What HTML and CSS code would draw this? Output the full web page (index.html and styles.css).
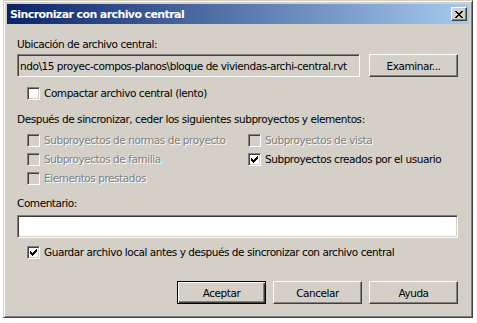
FILE: index.html
```html
<!DOCTYPE html>
<html lang="es">
<head>
<meta charset="utf-8">
<title>Sincronizar con archivo central</title>
<link rel="stylesheet" href="styles.css">
</head>
<body>
<div class="window">
  <div class="titlebar">
    <span class="title">Sincronizar con archivo central</span>
    <span class="close" aria-label="Cerrar">
      <svg width="8" height="7" viewBox="0 0 8 7" shape-rendering="crispEdges">
        <path d="M0 0h2v1H0zM6 0h2v1H6zM1 1h2v1H1zM5 1h2v1H5zM2 2h4v1H2zM3 3h2v1H3zM2 4h4v1H2zM1 5h2v1H1zM5 5h2v1H5zM0 6h2v1H0zM6 6h2v1H6z" fill="#000"/>
      </svg>
    </span>
  </div>
  <div class="content">
    <div class="label">Ubicación de archivo central:</div>
    <div class="path-row">
      <div class="field field-path">ndo\15 proyec-compos-planos\bloque de viviendas-archi-central.rvt</div>
      <div class="btn">Examinar...</div>
    </div>
    <div class="check row-compact"><span class="box"></span><span class="txt">Compactar archivo central (lento)</span></div>
    <div class="label lbl-after">Después de sincronizar, ceder los siguientes subproyectos y elementos:</div>
    <div class="grid">
      <div class="check disabled"><span class="box"></span><span class="txt">Subproyectos de normas de proyecto</span></div>
      <div class="check disabled"><span class="box"></span><span class="txt">Subproyectos de vista</span></div>
      <div class="check disabled"><span class="box"></span><span class="txt">Subproyectos de familia</span></div>
      <div class="check"><span class="box"><svg class="tick" width="7" height="7" viewBox="0 0 7 7" shape-rendering="crispEdges"><path d="M0 2h1v3H0zM1 3h1v3H1zM2 4h1v3H2zM3 3h1v3H3zM4 2h1v3H4zM5 1h1v3H5zM6 0h1v3H6z" fill="#000"/></svg></span><span class="txt">Subproyectos creados por el usuario</span></div>
      <div class="check disabled"><span class="box"></span><span class="txt">Elementos prestados</span></div>
    </div>
    <div class="label lbl-comment">Comentario:</div>
    <div class="field field-comment"></div>
    <div class="check row-save"><span class="box"><svg class="tick" width="7" height="7" viewBox="0 0 7 7" shape-rendering="crispEdges"><path d="M0 2h1v3H0zM1 3h1v3H1zM2 4h1v3H2zM3 3h1v3H3zM4 2h1v3H4zM5 1h1v3H5zM6 0h1v3H6z" fill="#000"/></svg></span><span class="txt">Guardar archivo local antes y después de sincronizar con archivo central</span></div>
    <div class="buttons">
      <div class="btn default">Aceptar</div>
      <div class="btn">Cancelar</div>
      <div class="btn">Ayuda</div>
    </div>
  </div>
</div>
</body>
</html>
```

FILE: styles.css
```css
html, body {
  margin: 0;
  background: #ffffff;
}
body {
  font-family: "DejaVu Sans", "Liberation Sans", sans-serif;
  font-size: 10.5px;
  letter-spacing: -0.45px;
  color: #000;
}
.window {
  margin-left: 3px;
  width: 470px;
  height: 318px;
  box-sizing: border-box;
  background: #d4d0c8;
  border: 1px solid;
  border-color: #d4d0c8 #404040 #404040 #d4d0c8;
  box-shadow: inset 1px 1px #fff, inset -1px -1px #808080;
  padding: 3px;
  display: flex;
  flex-direction: column;
}
.titlebar {
  height: 20px;
  flex: none;
  background: linear-gradient(to right, #0a246a, #a6caf0);
  display: flex;
  align-items: center;
  justify-content: space-between;
  padding: 0 2px 0 3px;
}
.title {
  color: #fff;
  font-size: 11px;
  font-weight: bold;
  letter-spacing: -0.6px;
  line-height: 13px;
}
.close {
  width: 16px;
  height: 14px;
  box-sizing: border-box;
  background: #d4d0c8;
  border: 1px solid;
  border-color: #fff #404040 #404040 #fff;
  box-shadow: inset -1px -1px #808080, inset 1px 1px #d4d0c8;
  display: flex;
  align-items: center;
  justify-content: center;
}
.close svg { display: block; }
.content {
  padding: 14px 11px 0 10px;
  display: flex;
  flex-direction: column;
}
.label {
  line-height: 13px;
  height: 13px;
  white-space: nowrap;
}
.path-row {
  display: flex;
  gap: 9px;
  margin-top: 3px;
}
.field {
  box-sizing: border-box;
  height: 23px;
  border: 1px solid;
  border-color: #808080 #fff #fff #808080;
  box-shadow: inset 1px 1px #404040, inset -1px -1px #d4d0c8;
}
.field-path {
  width: 343px;
  background: #d4d0c8;
  padding: 0 2px;
  display: flex;
  align-items: center;
  white-space: nowrap;
  overflow: hidden;
}
.field-comment {
  background: #fff;
  margin-top: 5px;
}
.btn {
  box-sizing: border-box;
  width: 89px;
  height: 23px;
  flex: none;
  display: flex;
  align-items: center;
  justify-content: center;
  border: 1px solid;
  border-color: #fff #404040 #404040 #fff;
  box-shadow: inset -1px -1px #808080, inset 1px 1px #d4d0c8;
}
.btn.default {
  border-color: #000;
  box-shadow: inset 1px 1px #fff, inset -1px -1px #404040, inset -2px -2px #808080;
}
.check {
  display: flex;
  align-items: center;
  height: 13px;
  line-height: 13px;
  padding-left: 10px;
  white-space: nowrap;
}
.box {
  flex: none;
  width: 13px;
  height: 13px;
  box-sizing: border-box;
  margin-right: 4px;
  background: #fff;
  border: 1px solid;
  border-color: #808080 #fff #fff #808080;
  box-shadow: inset 1px 1px #404040, inset -1px -1px #d4d0c8;
  position: relative;
}
.tick {
  position: absolute;
  left: 2px;
  top: 2px;
  display: block;
}
.check.disabled .box {
  background: #d4d0c8;
}
.check.disabled .txt {
  color: #808080;
  text-shadow: 1px 1px 0 #fff;
}
.row-compact { margin-top: 10px; }
.lbl-after { margin-top: 13px; }
.grid {
  display: grid;
  grid-template-columns: 221px 1fr;
  row-gap: 6px;
  margin-top: 8px;
}
.lbl-comment { margin-top: 12px; }
.row-save { margin-top: 8px; }
.buttons {
  display: flex;
  justify-content: flex-end;
  gap: 7px;
  margin-top: 22px;
}
```
